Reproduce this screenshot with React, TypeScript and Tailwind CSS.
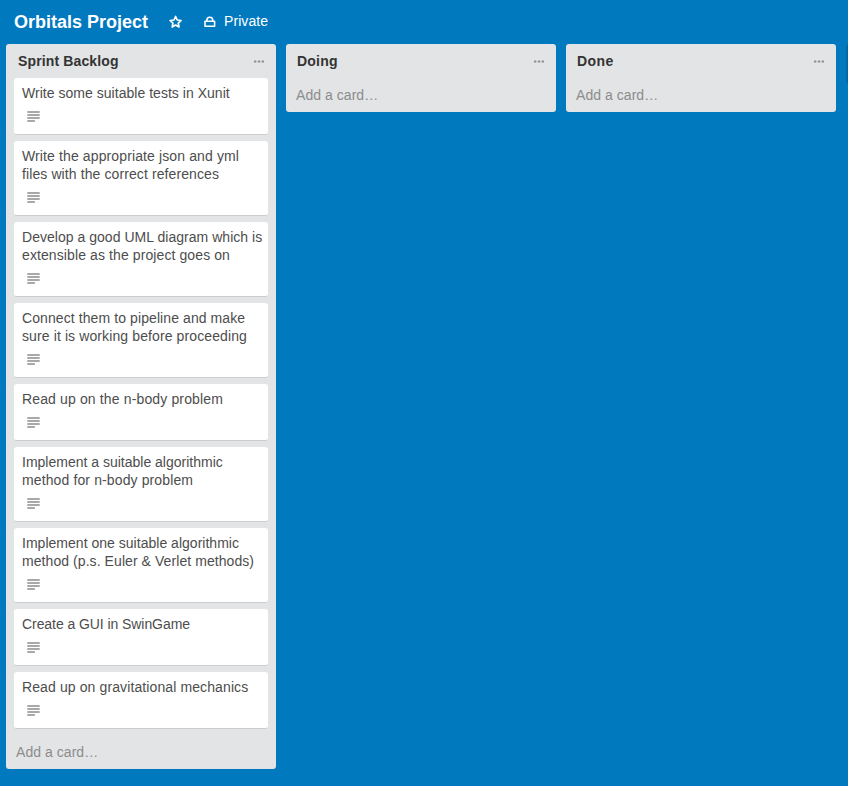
import React from 'react';

type Line = { text: string; tracking: string };
type Card = { lines: Line[] };
type ListData = { title: string; titleStyle: string; cards: Card[] };

const lists: ListData[] = [
  {
    title: 'Sprint Backlog',
    titleStyle: 'pl-px tracking-[0.13px]',
    cards: [
      { lines: [{ text: 'Write some suitable tests in Xunit', tracking: 'tracking-[0.03px]' }] },
      {
        lines: [
          { text: 'Write the appropriate json and yml', tracking: 'tracking-[0.12px]' },
          { text: 'files with the correct references', tracking: 'tracking-[0.1px]' },
        ],
      },
      {
        lines: [
          { text: 'Develop a good UML diagram which is', tracking: 'tracking-[0.03px]' },
          { text: 'extensible as the project goes on', tracking: 'tracking-[0.1px]' },
        ],
      },
      {
        lines: [
          { text: 'Connect them to pipeline and make', tracking: 'tracking-[0.09px]' },
          { text: 'sure it is working before proceeding', tracking: 'tracking-[0.11px]' },
        ],
      },
      { lines: [{ text: 'Read up on the n-body problem', tracking: 'tracking-[0.14px]' }] },
      {
        lines: [
          { text: 'Implement a suitable algorithmic', tracking: 'tracking-normal' },
          { text: 'method for n-body problem', tracking: 'tracking-[0.12px]' },
        ],
      },
      {
        lines: [
          { text: 'Implement one suitable algorithmic', tracking: 'tracking-[0.02px]' },
          { text: 'method (p.s. Euler & Verlet methods)', tracking: 'tracking-[0.07px]' },
        ],
      },
      { lines: [{ text: 'Create a GUI in SwinGame', tracking: 'tracking-[-0.07px]' }] },
      { lines: [{ text: 'Read up on gravitational mechanics', tracking: 'tracking-[0.11px]' }] },
    ],
  },
  { title: 'Doing', titleStyle: 'tracking-[0.2px]', cards: [] },
  { title: 'Done', titleStyle: 'tracking-[0.4px]', cards: [] },
];

function StarIcon() {
  return (
    <svg width="14" height="14" viewBox="0 0 14 14" fill="none" stroke="currentColor" strokeWidth="1.7" strokeLinejoin="round">
      <path d="M6.6 1.5 8.2 5l3.9.5-2.8 2.7.7 3.8-3.4-1.9L3.2 12l.7-3.8L1.1 5.5 5 5z" />
    </svg>
  );
}

function LockIcon() {
  return (
    <svg width="12" height="12" viewBox="0 0 12 12" fill="none" stroke="currentColor" strokeWidth="1.6" strokeLinejoin="round">
      <path d="M1 5.2h9.6v5H1z" />
      <path d="M2.9 5V4a2.9 2.8 0 0 1 5.8 0v1" />
    </svg>
  );
}

function DescriptionIcon() {
  return (
    <svg width="13" height="12" viewBox="0 0 13 12" fill="#8c8c8c">
      <path d="M.3.2h12.4v1.5H.3zM.3 3.2h12.4v1.5H.3zM.3 6.2h12.4v1.5H.3zM.3 9.2h7.6v1.5H.3z" />
    </svg>
  );
}

function MenuIcon() {
  return (
    <svg width="10" height="3" viewBox="0 0 10 3" fill="#8c8c8c">
      <rect x="0" y="0.4" width="2.4" height="2.2" rx="0.6" />
      <rect x="3.8" y="0.4" width="2.4" height="2.2" rx="0.6" />
      <rect x="7.6" y="0.4" width="2.4" height="2.2" rx="0.6" />
    </svg>
  );
}

function CardView({ card }: { card: Card }) {
  return (
    <article className="rounded-[3px] border-b border-[#cccccc] bg-white px-2 pt-1.5">
      <p className="text-sm leading-[18px] whitespace-nowrap text-[#4d4d4d]">
        {card.lines.map((line) => (
          <span key={line.text} className={`block ${line.tracking}`}>{line.text}</span>
        ))}
      </p>
      <div className="h-8 pt-[9px] pl-[5px]">
        <DescriptionIcon />
      </div>
    </article>
  );
}

function ListView({ list }: { list: ListData }) {
  return (
    <section className="w-[270px] shrink-0 rounded-[3px] bg-[#e2e4e6]">
      <header className="flex h-[34px] items-center justify-between pr-3 pl-[11px]">
        <h2 className={`text-sm font-bold text-[#333333] ${list.titleStyle}`}>{list.title}</h2>
        <MenuIcon />
      </header>
      {list.cards.length > 0 && (
        <div className="flex flex-col gap-1.5 px-2 pb-1.5">
          {list.cards.map((card) => (
            <CardView key={card.lines[0].text} card={card} />
          ))}
        </div>
      )}
      <footer className="flex h-[34px] items-center px-[10px] text-sm tracking-[0.05px] text-[#8c8c8c]">Add a card…</footer>
    </section>
  );
}

export default function App() {
  return (
    <div className="h-[786px] w-full overflow-hidden bg-[#0079bf] font-['Liberation_Sans',Arial,sans-serif]">
      <header className="flex h-11 items-center pl-[14px] text-white">
        <h1 className="w-[155px] text-lg font-bold whitespace-nowrap">Orbitals Project</h1>
        <StarIcon />
        <div className="ml-[21px] flex items-center gap-2 text-sm">
          <LockIcon />
          <span className="pb-0.5 tracking-[0.08px]">Private</span>
        </div>
      </header>
      <main className="flex items-start gap-[10px] pl-1.5">
        {lists.map((list) => (
          <ListView key={list.title} list={list} />
        ))}
        <div className="h-10 w-[270px] shrink-0 rounded-[3px] bg-[#006aa7]" />
      </main>
    </div>
  );
}
